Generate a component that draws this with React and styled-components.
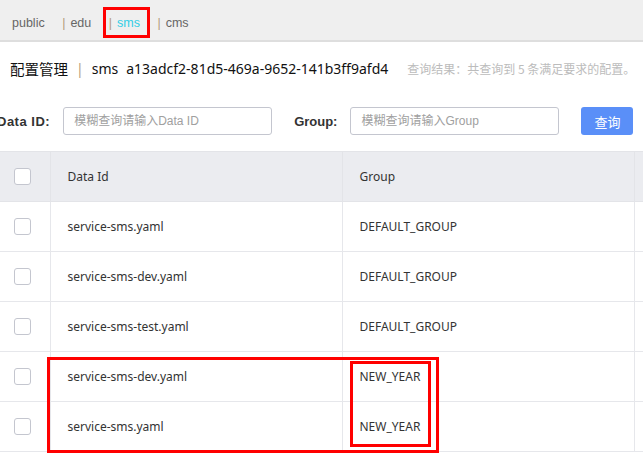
import React from "react";
import styled, { createGlobalStyle } from "styled-components";

const GlobalStyle = createGlobalStyle`
  html, body {
    margin: 0;
    padding: 0;
    background: #fff;
    overflow: hidden;
  }
  body {
    font-family: "Liberation Sans", "Noto Sans CJK SC", sans-serif;
    color: #333;
  }
`;

const namespaces = [
  { name: "public", first: true },
  { name: "edu" },
  { name: "sms", active: true, marked: true },
  { name: "cms" },
];

const rows = [
  { id: "service-sms.yaml", group: "DEFAULT_GROUP" },
  { id: "service-sms-dev.yaml", group: "DEFAULT_GROUP" },
  { id: "service-sms-test.yaml", group: "DEFAULT_GROUP" },
  { id: "service-sms-dev.yaml", group: "NEW_YEAR" },
  { id: "service-sms.yaml", group: "NEW_YEAR" },
];

const App = () => {
  return (
    <Page>
      <GlobalStyle />
      <NamespaceBar>
        {namespaces.map((ns) => (
          <NamespaceItem key={ns.name} marked={ns.marked}>
            {!ns.first && <Pipe>|</Pipe>}
            <NamespaceName active={ns.active}>{ns.name}</NamespaceName>
          </NamespaceItem>
        ))}
      </NamespaceBar>

      <TitleRow>
        <TitleCn>配置管理</TitleCn>
        <TitlePipe>|</TitlePipe>
        <TitleText>sms</TitleText>
        <TitleText>a13adcf2-81d5-469a-9652-141b3ff9afd4</TitleText>
        <ResultText>查询结果：共查询到 5 条满足要求的配置。</ResultText>
      </TitleRow>

      <SearchRow>
        <Label wide>Data ID:</Label>
        <Input placeholder="模糊查询请输入Data ID" />
        <Label spaced>Group:</Label>
        <Input placeholder="模糊查询请输入Group" />
        <SearchButton>查询</SearchButton>
      </SearchRow>

      <TableWrap>
        <Table>
          <colgroup>
            <col style={{ width: 50 }} />
            <col style={{ width: 292 }} />
            <col style={{ width: 292 }} />
            <col style={{ width: 120 }} />
          </colgroup>
          <thead>
            <tr>
              <HeadCell>
                <Checkbox />
              </HeadCell>
              <HeadCell>Data Id</HeadCell>
              <HeadCell>Group</HeadCell>
              <HeadCell />
            </tr>
          </thead>
          <tbody>
            {rows.map((row, i) => (
              <tr key={i}>
                <Cell>
                  <Checkbox />
                </Cell>
                <Cell>{row.id}</Cell>
                <Cell>{row.group}</Cell>
                <Cell />
              </tr>
            ))}
          </tbody>
        </Table>
        <MarkBox top={206} left={47} width={392} height={96} />
        <MarkBox top={210} left={350} width={81} height={86} />
      </TableWrap>
    </Page>
  );
};

const Page = styled.div`
  width: 643px;
  height: 456px;
  overflow: hidden;
`;

const NamespaceBar = styled.div`
  height: 42px;
  box-sizing: border-box;
  padding: 5px 0 0 12px;
  background: #efefef;
  border-bottom: 2px solid #dedede;
  display: flex;
  align-items: center;
  gap: 17.5px;
  font-size: 12.5px;
`;

const NamespaceItem = styled.span`
  position: relative;
  display: inline-flex;
  align-items: center;
  &::after {
    content: "";
    display: ${(p) => (p.marked ? "block" : "none")};
    position: absolute;
    left: -6px;
    right: -10px;
    top: -9px;
    bottom: -8px;
    border: 3px solid #f00;
  }
`;

const Pipe = styled.span`
  color: #b39b7c;
  margin-right: 5px;
`;

const NamespaceName = styled.span`
  color: ${(p) => (p.active ? "#33cde5" : "#666")};
`;

const TitleRow = styled.div`
  display: flex;
  align-items: center;
  height: 53px;
  padding-left: 10px;
  white-space: nowrap;
  color: #111;
  font-family: "Noto Sans", "Noto Sans CJK SC", sans-serif;
  font-size: 14px;
`;

const TitleCn = styled.span`
  font-family: "Noto Sans CJK SC", sans-serif;
  font-size: 14.5px;
`;

const TitlePipe = styled.span`
  color: #b39b7c;
  margin: 0 8px;
`;

const TitleText = styled.span`
  margin-right: 8px;
`;

const ResultText = styled.span`
  margin-left: 11px;
  color: #bcbcbc;
  font-size: 12px;
  font-family: "Noto Sans CJK SC", sans-serif;
`;

const SearchRow = styled.div`
  display: flex;
  align-items: center;
  height: 28px;
  margin-top: 12px;
  margin-left: -3px;
`;

const Label = styled.span`
  font-weight: bold;
  font-size: 13px;
  color: #333;
  margin-right: 13px;
  margin-left: ${(p) => (p.spaced ? "22px" : "0")};
  letter-spacing: ${(p) => (p.wide ? "0.5px" : "0")};
`;

const Input = styled.input`
  width: 209px;
  height: 28px;
  box-sizing: border-box;
  border: 1px solid #c4c6cf;
  border-radius: 3px;
  padding: 0 10px;
  font-size: 12px;
  font-family: "Liberation Sans", "Noto Sans CJK SC", sans-serif;
  outline: none;
  &::placeholder {
    color: #a0a0a0;
  }
`;

const SearchButton = styled.button`
  margin-left: 22px;
  width: 52px;
  height: 28px;
  border: none;
  border-radius: 3px;
  background: #5a8ff8;
  color: #fff;
  font-size: 13px;
  font-family: "Noto Sans CJK SC", sans-serif;
`;

const TableWrap = styled.div`
  position: relative;
  margin-top: 16px;
`;

const Table = styled.table`
  border-collapse: collapse;
  table-layout: fixed;
  width: 754px;
  font-family: "Noto Sans", "Noto Sans CJK SC", sans-serif;
  font-size: 12px;
  color: #333;
`;

const HeadCell = styled.th`
  height: 49px;
  background: #ebecf0;
  border: 1px solid #e3e4e8;
  border-left: none;
  padding: 0 0 0 17px;
  text-align: left;
  font-weight: normal;
  &:first-child {
    padding-left: 14px;
  }
`;

const Cell = styled.td`
  height: 49px;
  border-bottom: 1px solid #e6e7eb;
  border-right: 1px solid #e6e7eb;
  padding: 0 0 0 17px;
  &:first-child {
    padding-left: 14px;
  }
`;

const Checkbox = styled.span`
  display: block;
  width: 15px;
  height: 15px;
  border: 1px solid #c4c6cf;
  border-radius: 3px;
  background: #fff;
`;

const MarkBox = styled.div`
  position: absolute;
  top: ${(p) => p.top}px;
  left: ${(p) => p.left}px;
  width: ${(p) => p.width}px;
  height: ${(p) => p.height}px;
  box-sizing: border-box;
  border: 3px solid #f00;
  pointer-events: none;
`;

export default App;
